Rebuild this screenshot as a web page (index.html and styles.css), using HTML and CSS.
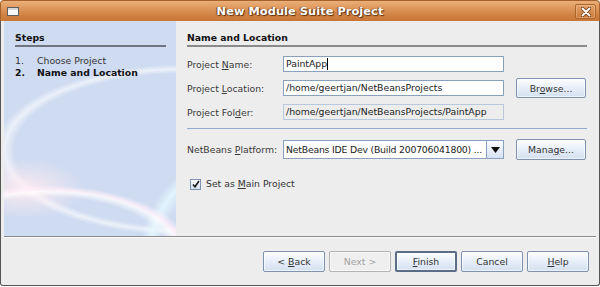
FILE: index.html
```html
<!DOCTYPE html>
<html>
<head>
<meta charset="utf-8">
<link rel="stylesheet" href="styles.css">
</head>
<body>
<div class="window">
  <div class="titlebar">
    <span class="winicon"></span>
    <span class="title">New Module Suite Project</span>
    <span class="close">
      <svg width="10" height="10" viewBox="0 0 10 10"><path d="M1.5 1.5 L8.5 8.5 M8.5 1.5 L1.5 8.5" stroke="#6b3a14" stroke-width="3.6" stroke-linecap="round"/><path d="M1.5 1.5 L8.5 8.5 M8.5 1.5 L1.5 8.5" stroke="#fff" stroke-width="2" stroke-linecap="round"/></svg>
    </span>
  </div>
  <div class="body">
    <div class="main">
      <aside class="steps">
        <div class="steps-head">Steps</div>
        <ol class="steps-list">
          <li><span class="num">1.</span><span>Choose Project</span></li>
          <li class="current"><span class="num">2.</span><span>Name and Location</span></li>
        </ol>
      </aside>
      <section class="panel">
        <div class="panel-head">Name and Location</div>
        <div class="form">
          <label class="lbl">Project <u>N</u>ame:</label>
          <div class="field"><span>PaintApp</span><span class="caret"></span></div>
          <span></span>
          <label class="lbl">Project <u>L</u>ocation:</label>
          <div class="field">/home/geertjan/NetBeansProjects</div>
          <button class="btn">Br<u>o</u>wse...</button>
          <label class="lbl">Project Fol<u>d</u>er:</label>
          <div class="field readonly">/home/geertjan/NetBeansProjects/PaintApp</div>
          <span></span>
        </div>
        <div class="sep-blue"></div>
        <div class="form platform">
          <label class="lbl">NetBeans <u>P</u>latform:</label>
          <div class="combo">
            <span class="combo-text">NetBeans IDE Dev (Build 200706041800) ...</span>
            <span class="combo-arrow"><svg width="9" height="6" viewBox="0 0 9 6"><path d="M0 0 H9 L4.5 6 Z" fill="#111"/></svg></span>
          </div>
          <button class="btn btn-tall">Mana<u>g</u>e...</button>
        </div>
        <div class="check-row">
          <span class="checkbox"><svg width="8" height="8" viewBox="0 0 8 8"><path d="M1 4.5 L3 6.8 L7 1" stroke="#1a1a1a" stroke-width="1.6" fill="none"/></svg></span>
          <span>Set as <u>M</u>ain Project</span>
        </div>
      </section>
    </div>
    <div class="footer">
      <button class="btn fbtn">&lt; <u>B</u>ack</button>
      <button class="btn fbtn" disabled>Next &gt;</button>
      <button class="btn fbtn default"><u>F</u>inish</button>
      <button class="btn fbtn">Cancel</button>
      <button class="btn fbtn"><u>H</u>elp</button>
    </div>
  </div>
</div>
</body>
</html>
```

FILE: styles.css
```css
* { box-sizing: border-box; }
html, body { margin: 0; padding: 0; background: #ffffff; }
body { width: 600px; height: 287px; overflow: hidden; font-family: "DejaVu Sans", sans-serif; font-size: 9.3px; color: #333; }
u { text-decoration: underline; text-underline-offset: 1px; }

.window { width: 600px; height: 286px; display: flex; flex-direction: column; }

.titlebar {
  height: 21px; position: relative; display: flex; align-items: center; justify-content: center;
  background: linear-gradient(#eab078 0%, #dd955a 40%, #cf803f 75%, #c87638 100%);
  border: 1px solid #a7622c; border-bottom: none; border-radius: 4px 4px 0 0;
}
.winicon {
  position: absolute; left: 6px; top: 6px; width: 12px; height: 9px;
  border: 1px solid #5e5e5e; background: linear-gradient(#d8d8d8 0 2px, #f7f7f7 2px);
}
.title { color: #fff; font-weight: bold; font-size: 11.3px; text-shadow: 1px 1px 1px #5a2f0f, -1px 0 1px #7a4318; letter-spacing: 0.1px; }
.close {
  position: absolute; right: 3px; top: 3px; width: 21px; height: 15px;
  border: 1px solid #a96429; border-radius: 2px; box-shadow: inset 0 0 0 1px rgba(255,220,180,0.35);
  display: flex; align-items: center; justify-content: center;
}

.body {
  flex: 1; display: flex; flex-direction: column; background: #ededed;
  border: 1px solid #555; border-top: none; border-radius: 0 0 3px 3px; padding: 0 3px 2px 3px;
}
.main { height: 216px; flex-shrink: 0; display: flex; border-bottom: 1px solid #8c8c8c; box-shadow: 0 1px 0 #fafafa; }

.steps {
  width: 172px; flex-shrink: 0; padding: 8px 10px 0 11px;
  background:
    radial-gradient(ellipse 150px 70px at 25% 108%, rgba(255,255,255,0) 80%, rgba(255,255,255,0.75) 88%, rgba(255,240,250,0.9) 90%, rgba(255,255,255,0) 97%),
    radial-gradient(ellipse 120px 120px at 140% 110%, rgba(255,255,255,0) 70%, rgba(230,250,255,0.8) 80%, rgba(255,255,255,0) 88%),
    radial-gradient(ellipse 60px 30px at 12% 78%, rgba(255,235,240,0.9), rgba(255,230,240,0) 100%),
    radial-gradient(ellipse 200px 90px at 105% 60%, rgba(255,255,255,0) 85%, rgba(255,255,255,0.6) 90%, rgba(255,255,255,0) 95%),
    #cfdbf1;
}
.steps-head { font-weight: bold; color: #111; line-height: 12px; padding: 3px 0 1px; border-bottom: 2px solid #6e7580; }
.steps-list { list-style: none; margin: 8px 0 0; padding: 0; }
.steps-list li { display: flex; line-height: 12px; color: #333; }
.steps-list li.current { font-weight: bold; color: #111; }
.num { width: 22px; }

.panel { flex: 1; min-width: 0; padding: 8px 9px 0 11px; }
.panel-head { font-weight: bold; color: #111; line-height: 12px; padding: 3px 0 1px; border-bottom: 2px solid #8a8a8a; }

.form { display: grid; grid-template-columns: 84px 221px 70px; column-gap: 12px; grid-auto-rows: 20px; row-gap: 4px; margin-top: 7px; align-items: center; }
.lbl { color: #3a3a3a; white-space: nowrap; }
.field {
  height: 16px; background: #fff; border: 1px solid #8aa0bf; padding: 0 2px; line-height: 14px;
  color: #222; white-space: nowrap; overflow: hidden; display: flex;
}
.field.readonly { background: #ededed; border-color: #b9c8dc; }
.caret { display: inline-block; width: 1px; height: 12px; margin-top: 1px; background: #000; }

.btn {
  height: 20px; font-family: inherit; font-size: 9.3px; color: #333; padding: 0;
  background: linear-gradient(#fdfeff, #e9f0f9 45%, #d3e0f1);
  border: 1px solid #7f92ad; border-radius: 2px; box-shadow: inset 0 0 0 1px rgba(255,255,255,0.6);
}
.btn-tall { height: 21px; }
.btn:disabled { color: #a3a3a3; background: #efefef; border-color: #b2b2b2; }
.btn.default { border: 2px solid #5b6c86; }

.sep-blue { height: 1px; background: #94aad0; margin-top: 6px; }
.platform { margin-top: 10px; grid-auto-rows: 21px; }
.combo { height: 19px; display: flex; border: 1px solid #8aa0bf; background: #fff; min-width: 0; }
.combo-text { flex: 1; min-width: 0; padding: 0 2px; line-height: 17px; white-space: nowrap; overflow: hidden; color: #222; letter-spacing: -0.2px; }
.combo-arrow {
  width: 17px; flex-shrink: 0; display: flex; align-items: center; justify-content: center;
  border-left: 1px solid #8aa0bf; background: linear-gradient(#fbfcff, #d6e2f2);
}

.check-row { display: flex; align-items: center; gap: 5px; margin-top: 18px; padding-left: 3px; color: #333; line-height: 12px; }
.checkbox {
  width: 11px; height: 11px; border: 1px solid #7f92ad; background: linear-gradient(#fdfeff, #d3e0f1);
  display: flex; align-items: center; justify-content: center;
}

.footer { flex: 1; display: flex; justify-content: flex-end; align-items: flex-start; padding: 14px 7px 0 0; gap: 3px; }
.fbtn { width: 62px; height: 21px; }
.fbtn + .fbtn { margin-left: 1px; }
```
